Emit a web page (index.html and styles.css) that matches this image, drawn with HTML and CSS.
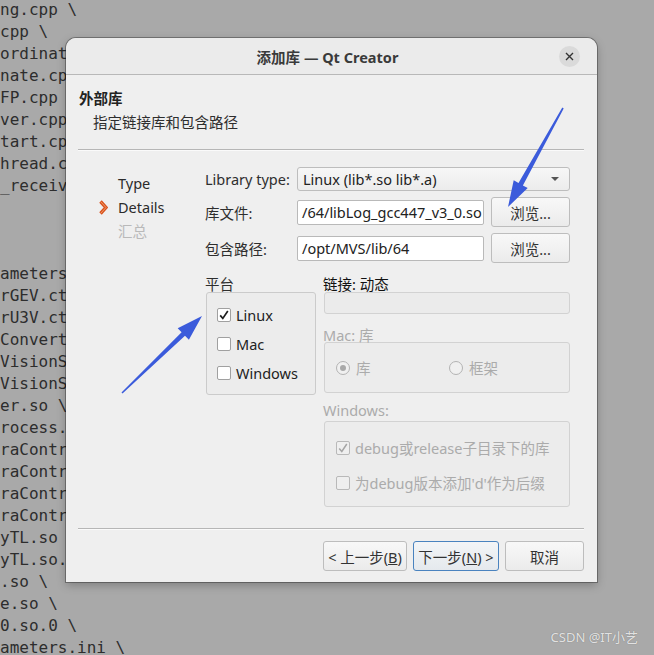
FILE: index.html
```html
<!DOCTYPE html>
<html lang="zh-CN">
<head>
    <meta charset="UTF-8">
    <meta name="viewport" content="width=device-width, initial-scale=1.0">
    <title>添加库 — Qt Creator</title>
    <link rel="stylesheet" href="styles.css">
</head>
<body>
<pre class="terminal">ng.cpp \
cpp \
ordinate.cpp \
nate.cpp \
FP.cpp \
ver.cpp \
tart.cpp \
hread.cpp \
_receiver.cpp



ameters.h \
rGEV.ctl \
rU3V.ctl \
Convert.so \
VisionSDK.so \
VisionSDK.so \
er.so \
rocess.so \
raControl.so \
raControl.so \
raControl.so \
raControl.so \
yTL.so \
yTL.so.4 \
.so \
e.so \
0.so.0 \
ameters.ini \</pre>

    <div class="dialog">
        <div class="titlebar">
            <span class="title">添加库 — Qt Creator</span>
            <span class="close">
                <svg width="9" height="9" viewBox="0 0 9 9"><path d="M1 1L8 8M8 1L1 8" stroke="#333" stroke-width="1.4"/></svg>
            </span>
        </div>

        <div class="dialog-body">
            <div class="page-header">
                <div class="page-title">外部库</div>
                <div class="page-subtitle">指定链接库和包含路径</div>
            </div>
            <div class="separator"></div>

            <div class="wizard">
                <ul class="steps">
                    <li><span class="marker"></span>Type</li>
                    <li>
                        <span class="marker">
                            <svg width="9" height="15" viewBox="0 0 9 15">
                                <path d="M1.5 1.5L7 7.5L1.5 13.5" fill="none" stroke="#d8531f" stroke-width="3.4" stroke-linejoin="miter"/>
                                <path d="M1.5 1.5L7 7.5L1.5 13.5" fill="none" stroke="#f7a06e" stroke-width="0.9"/>
                            </svg>
                        </span>Details
                    </li>
                    <li class="pending"><span class="marker"></span>汇总</li>
                </ul>

                <div class="page">
                    <div class="form-grid">
                        <label class="field-label">Library type:</label>
                        <div class="combo">Linux (lib*.so lib*.a)<span class="combo-arrow"></span></div>

                        <label class="field-label">库文件:</label>
                        <div class="path-row">
                            <div class="line-edit">/64/libLog_gcc447_v3_0.so</div>
                            <button class="btn btn-browse">浏览...</button>
                        </div>

                        <label class="field-label">包含路径:</label>
                        <div class="path-row">
                            <div class="line-edit">/opt/MVS/lib/64</div>
                            <button class="btn btn-browse">浏览...</button>
                        </div>
                    </div>

                    <div class="options">
                        <div class="platform">
                            <div class="group-label">平台</div>
                            <div class="group-box platform-box">
                                <div class="check-row">
                                    <span class="checkbox">
                                        <svg width="12" height="12" viewBox="0 0 12 12"><path d="M2.2 6.4L4.8 9.4L9.8 2" fill="none" stroke="#1e1e1e" stroke-width="1.7"/></svg>
                                    </span>Linux
                                </div>
                                <div class="check-row"><span class="checkbox"></span>Mac</div>
                                <div class="check-row"><span class="checkbox"></span>Windows</div>
                            </div>
                        </div>

                        <div class="linkage">
                            <div class="group-label linkage-label">链接: 动态</div>
                            <div class="disabled-field"></div>

                            <div class="group-label disabled mac-label">Mac: 库</div>
                            <div class="group-box disabled-box mac-box">
                                <div class="radio-row radio-first"><span class="radio checked"></span>库</div>
                                <div class="radio-row"><span class="radio"></span>框架</div>
                            </div>

                            <div class="group-label disabled win-label">Windows:</div>
                            <div class="group-box disabled-box win-box">
                                <div class="win-row">
                                    <span class="checkbox checkbox-disabled">
                                        <svg width="12" height="12" viewBox="0 0 12 12"><path d="M2.2 6.4L4.8 9.4L9.8 2" fill="none" stroke="#a6a6a6" stroke-width="1.5"/></svg>
                                    </span>debug或release子目录下的库
                                </div>
                                <div class="win-row"><span class="checkbox checkbox-disabled"></span>为debug版本添加'd'作为后缀</div>
                            </div>
                        </div>
                    </div>
                </div>
            </div>

            <div class="footer">
                <div class="separator"></div>
                <div class="buttons">
                    <button class="btn btn-nav">&lt; 上一步(<u>B</u>)</button>
                    <button class="btn btn-nav btn-default">下一步(<u>N</u>) &gt;</button>
                    <button class="btn btn-cancel">取消</button>
                </div>
            </div>
        </div>
    </div>

    <!-- annotation arrows drawn over the screenshot -->
    <svg class="annotations" width="654" height="655" viewBox="0 0 654 655">
        <polygon fill="#3b5bdb" points="563.7,108.4 522.9,185.4 527.7,188.1 508,207 513.7,180.3 518.5,183.0 562.3,107.6"/>
        <polygon fill="#3b5bdb" points="122.5,393.5 185.0,335.8 188.9,339.8 202,316 177.7,328.2 181.6,332.2 121.5,392.5"/>
    </svg>

    <div class="watermark">CSDN @IT小艺</div>
</body>
</html>
```

FILE: styles.css
```css
* {
    box-sizing: border-box;
}
body {
    margin: 0;
    width: 654px;
    height: 655px;
    overflow: hidden;
    position: relative;
    background: #a9a9a9;
    font-family: "Noto Sans", "Noto Sans CJK SC", sans-serif;
    font-size: 14.5px;
    color: #333;
}
.terminal {
    margin: -1px 0 0;
    font-family: "DejaVu Sans Mono", monospace;
    font-size: 16px;
    line-height: 22px;
    color: #2d2d2d;
}

/* dialog window */
.dialog {
    position: absolute;
    left: 66px;
    top: 38px;
    width: 531px;
    height: 544px;
    display: flex;
    flex-direction: column;
    background: #efefef;
    border-radius: 10px 10px 0 0;
    box-shadow: 0 0 0 1px rgba(0, 0, 0, 0.3), 0 3px 10px rgba(0, 0, 0, 0.25);
    overflow: hidden;
}
.titlebar {
    height: 37px;
    flex: none;
    display: flex;
    align-items: center;
    padding-left: 30px;
    background: #ebebeb;
    border-bottom: 1px solid #b8b8b8;
}
.title {
    flex: 1;
    text-align: center;
    font-weight: 700;
    color: #3a3a3a;
}
.close {
    width: 21px;
    height: 21px;
    margin-right: 17px;
    border-radius: 50%;
    background: #dadada;
    display: flex;
    align-items: center;
    justify-content: center;
}
.dialog-body {
    flex: 1;
    display: flex;
    flex-direction: column;
}
.page-header {
    padding: 13px 13px 0;
    line-height: 20px;
}
.page-title {
    font-weight: 700;
    color: #222;
}
.page-subtitle {
    margin-top: 4px;
    padding-left: 14px;
    color: #2e2e2e;
}
.separator {
    height: 2px;
    margin: 17px 13px 0 12px;
    border-top: 1px solid #b6b6b6;
    border-bottom: 1px solid #fafafa;
}

/* wizard steps + page */
.wizard {
    display: flex;
    padding-top: 16px;
}
.steps {
    list-style: none;
    margin: 0 0 0 33px;
    padding: 4px 0 0;
    width: 106px;
    line-height: 24px;
    color: #2b2b2b;
}
.steps li {
    display: flex;
    align-items: center;
}
.marker {
    width: 19px;
    display: flex;
    align-items: center;
}
.steps .pending {
    color: #b9b9b9;
}
.page {
    width: 365px;
    flex: none;
}
.form-grid {
    display: grid;
    grid-template-columns: 92px minmax(0, 1fr);
    grid-template-rows: 24px 30px 30px;
    row-gap: 6px;
    align-items: center;
}
.field-label {
    color: #2e2e2e;
}
.combo {
    height: 24px;
    display: flex;
    align-items: center;
    justify-content: space-between;
    padding: 0 10px 0 5px;
    border: 1px solid #bdbdbd;
    border-radius: 3px;
    background: linear-gradient(#f7f7f7, #ececec);
    color: #222;
}
.combo-arrow {
    width: 0;
    height: 0;
    border-left: 4px solid transparent;
    border-right: 4px solid transparent;
    border-top: 4px solid #555;
}
.path-row {
    display: flex;
    align-items: center;
    gap: 7px;
    min-width: 0;
}
.line-edit {
    flex: 1;
    width: 0;
    min-width: 0;
    height: 25px;
    line-height: 23px;
    padding: 0 3px 0 4px;
    overflow: hidden;
    white-space: nowrap;
    background: #fff;
    border: 1px solid #b9b9b9;
    border-radius: 2px;
    color: #222;
}
.btn {
    font-family: inherit;
    font-size: 14.5px;
    color: #333;
    height: 30px;
    padding: 0;
    border: 1px solid #bdbdbd;
    border-radius: 3px;
    background: linear-gradient(#f8f8f8, #ebebeb);
}
.btn-browse {
    width: 79px;
    flex: none;
}

/* platform / linkage section */
.options {
    display: flex;
    gap: 6px;
    margin-top: 13px;
}
.platform {
    width: 112px;
}
.linkage {
    width: 247px;
}
.group-label {
    height: 16px;
    line-height: 16px;
    color: #2e2e2e;
}
.linkage-label {
    color: #111;
}
.group-label.disabled {
    color: #ababab;
    height: 14px;
    line-height: 14px;
}
.group-box {
    margin-left: 1px;
    border: 1px solid #cbcbcb;
    border-radius: 3px;
    background: #ececec;
}
.platform-box {
    width: 110px;
    padding: 7px 10px;
}
.check-row {
    height: 29px;
    display: flex;
    align-items: center;
    gap: 5px;
    color: #222;
}
.checkbox {
    width: 14px;
    height: 14px;
    flex: none;
    display: flex;
    align-items: center;
    justify-content: center;
    background: #fff;
    border: 1px solid #a0a0a0;
    border-radius: 2px;
}
.checkbox-disabled {
    background: #efefef;
    border-color: #b9b9b9;
}
.disabled-field {
    height: 22px;
    margin-left: 1px;
    border: 1px solid #d2d2d2;
    border-radius: 3px;
    background: #ebebeb;
}
.mac-label {
    margin-top: 14px;
}
.disabled-box {
    border-color: #d2d2d2;
    color: #ababab;
}
.mac-box {
    height: 51px;
    display: flex;
    align-items: center;
    padding: 0 11px;
}
.radio-row {
    display: flex;
    align-items: center;
    gap: 6px;
}
.radio-first {
    width: 113px;
}
.radio {
    width: 14px;
    height: 14px;
    border-radius: 50%;
    border: 1px solid #b3b3b3;
    background: #f0f0f0;
    display: flex;
    align-items: center;
    justify-content: center;
}
.radio.checked::after {
    content: "";
    width: 6px;
    height: 6px;
    border-radius: 50%;
    background: #a9a9a9;
}
.win-label {
    margin-top: 10px;
    margin-bottom: 4px;
}
.win-box {
    padding: 8px 11px 6px;
}
.win-row {
    height: 35px;
    display: flex;
    align-items: center;
    gap: 5px;
}

/* footer buttons */
.footer {
    margin-top: auto;
}
.footer .separator {
    margin-top: 0;
}
.buttons {
    display: flex;
    justify-content: flex-end;
    gap: 6px;
    padding: 11px 13px 11px;
}
.btn-nav {
    padding: 0 2px;
}
.btn-nav:first-child {
    width: 84px;
}
.btn-default {
    width: 86px;
    border-color: #4a83bf;
    background: linear-gradient(#f3f5f7, #e5e9ed);
}
.btn-cancel {
    width: 79px;
}

.annotations {
    position: absolute;
    left: 0;
    top: 0;
    pointer-events: none;
}
.watermark {
    position: absolute;
    right: 16px;
    bottom: 9px;
    font-family: "Noto Sans", "Noto Sans CJK SC", sans-serif;
    font-size: 13px;
    color: rgba(255, 255, 255, 0.8);
    text-shadow: 0 0 1px rgba(0, 0, 0, 0.35);
}
```
